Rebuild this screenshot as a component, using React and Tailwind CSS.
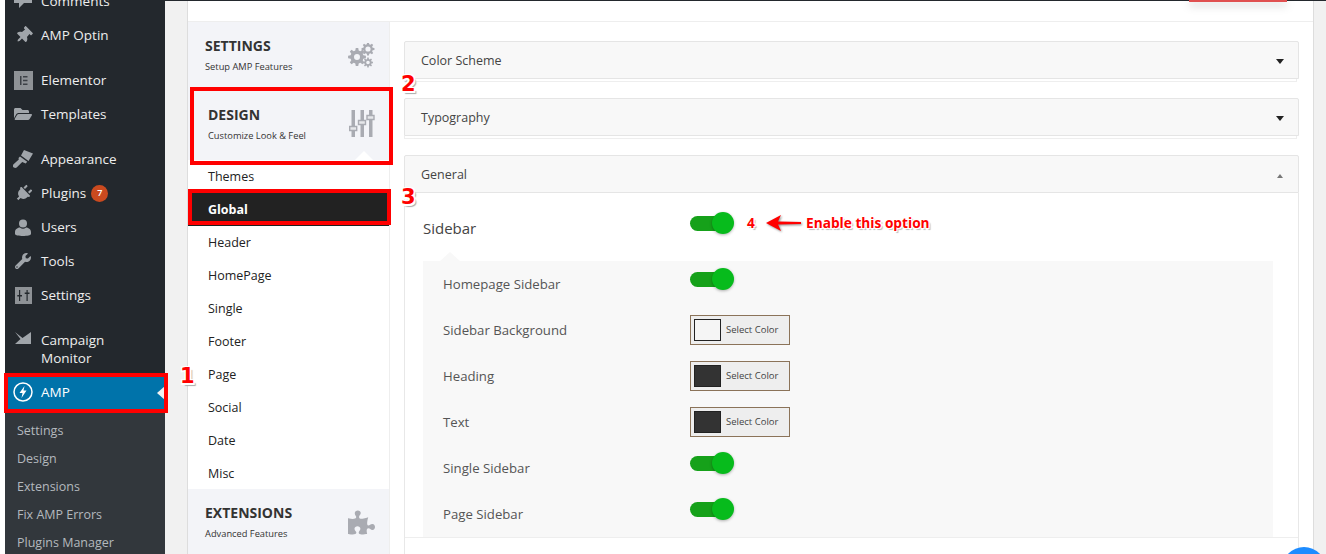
import React from "react";
import { FaThumbtack, FaFolderOpen, FaPlug, FaWrench, FaPuzzlePiece } from "react-icons/fa";

const gearPath = (cx, cy, ro, ri, hole, teeth) => {
  const pts = [];
  const step = (Math.PI * 2) / teeth;
  for (let k = 0; k < teeth; k++) {
    const a = k * step;
    const w = step * 0.22;
    [[a - w * 1.5, ri], [a - w * 0.8, ro], [a + w * 0.8, ro], [a + w * 1.5, ri]].forEach(([t, r]) => {
      pts.push(`${(cx + r * Math.cos(t)).toFixed(2)} ${(cy + r * Math.sin(t)).toFixed(2)}`);
    });
  }
  return `M${pts.join("L")}Z M${cx - hole} ${cy}a${hole} ${hole} 0 1 0 ${hole * 2} 0a${hole} ${hole} 0 1 0 ${-hole * 2} 0Z`;
};

const GearsIcon = () => (
  <svg width="27" height="25" viewBox="0 0 27 25">
    <path fill="#a9abb2" fillRule="evenodd" d={gearPath(9, 14, 9, 6.600, 3, 8)} />
    <path fill="#a9abb2" fillRule="evenodd" d={gearPath(20, 6, 6.500, 4.800, 2.600, 8)} />
    <path fill="#a9abb2" fillRule="evenodd" d={gearPath(20, 19.500, 5, 3.600, 1.800, 8)} />
  </svg>
);
const Elementor = () => (
  <svg width="19" height="19" viewBox="0 0 19 19"><path fill="#8e9296" d="M0 0h19v19H0z" /><path fill="#3c4146" d="M6 5h1.500v9H6zM9 5h4.500v1.500H9zM9 8.700h4.500v1.500H9zM9 12.500h4.500V14H9z" /></svg>
);
const SettingsIcon = () => (
  <svg width="17" height="17" viewBox="0 0 17 17"><path fill="#8e9296" d="M0 0h17v17H0z" /><path fill="#23282d" d="M4 3h1.200v5H7v1.500H5.200V14H4V9.500H2.300V8H4zM11.500 3h1.200v2.500h1.800V7h-1.800v7h-1.200V7H9.700V5.500h1.800z" /></svg>
);
const CampaignIcon = () => (
  <svg width="16" height="12" viewBox="0 0 16 12"><path fill="#a0a5aa" d="M0 0l7.500 6L16 0v12H0l5.500-5z" /></svg>
);
const AmpIcon = () => (
  <svg width="20" height="20" viewBox="0 0 20 20"><circle cx="10" cy="10" r="9" fill="none" stroke="#fff" strokeWidth="1.500" /><path fill="#fff" d="M11.500 4L6.500 11h3L8.500 16l5-7.500h-3z" /></svg>
);
const BrushIcon = () => (
  <svg width="20" height="18" viewBox="0 0 20 18">
    <path fill="#a0a5aa" d="M11 0l9 3.500-4.500 7.500L8 5.500zM7 6.500l7.200 5.300-1.500 1.700-3.500-1.500-5.500 5.500c-1 .7-3 .5-3.700-.7-.4-1 0-2 .8-2.800l5-4.500-.3-1.500z" />
  </svg>
);
const UserIcon = () => (
  <svg width="16" height="17" viewBox="0 0 16 17">
    <circle cx="8" cy="4.500" r="4" fill="#a0a5aa" />
    <path fill="#a0a5aa" d="M0 13c0-3 3-4.500 5-4.500 1 .8 2 1.200 3 1.200s2-.4 3-1.200c2 0 5 1.500 5 4.500v2c0 1.200-4 2-8 2s-8-.8-8-2z" />
  </svg>
);
const SlidersIcon = () => (
  <svg width="26" height="28" viewBox="0 0 26 28">
    <path fill="#a9abb2" d="M2.500 0h3.500v16H2.500zM2.500 21h3.500v6H2.500zM11.500 0h3.500v10h-3.500zM11.500 15h3.500v12h-3.500zM20 0h3.500v5H20zM20 10h3.500v17H20z" />
    <path fill="#e6e7ea" stroke="#a9abb2" strokeWidth="1.400" d="M.700 16.500h7v4h-7zM9.500 10.500h7v4h-7zM18 5.500h7v4h-7z" />
  </svg>
);

const sideGroups = [
  [
    { t: "Comments", i: <svg width="20" height="20" viewBox="0 0 20 20"><path fill="#a0a5aa" d="M1 2h18v10h-8l-5 5v-5H1z" /></svg> },
    { t: "AMP Optin", i: <FaThumbtack size={17} color="#a0a5aa" className="rotate-45" /> },
  ],
  [
    { t: "Elementor", i: <Elementor /> },
    { t: "Templates", i: <FaFolderOpen size={18} color="#a0a5aa" /> },
  ],
  [
    { t: "Appearance", i: <BrushIcon /> },
    { t: "Plugins", i: <FaPlug size={17} color="#a0a5aa" className="rotate-45" />, badge: "7" },
    { t: "Users", i: <UserIcon /> },
    { t: "Tools", i: <FaWrench size={16} color="#a0a5aa" /> },
    { t: "Settings", i: <SettingsIcon /> },
  ],
];

const subItems = ["Settings", "Design", "Extensions", "Fix AMP Errors", "Plugins Manager"];
const navItems = ["Themes", "Global", "Header", "HomePage", "Single", "Footer", "Page", "Social", "Date", "Misc"];

function SideRow({ t, i, badge }) {
  return (
    <div className="h-[34px] flex items-center text-[13.500px] text-[#eeeeee]">
      <span className="w-[36px] flex justify-center shrink-0">{i}</span>
      <span>{t}</span>
      {badge && (
        <span className="ml-[5px] w-[17px] h-[17px] rounded-full bg-[#ca4a1f] text-white text-[9px] font-semibold flex items-center justify-center">{badge}</span>
      )}
    </div>
  );
}

function Sidebar() {
  return (
    <aside className="w-[160px] shrink-0 bg-[#23282d] h-[554px] overflow-hidden">
      <div className="mt-[-16px]">
        {sideGroups.map((g, k) => (
          <div key={k} className="mb-[11px]">
            {g.map((r) => <SideRow key={r.t} {...r} />)}
          </div>
        ))}
        <div className="h-[52px] flex text-[13.500px] leading-[18px] text-[#eeeeee] pt-[8px]">
          <span className="w-[36px] flex justify-center shrink-0 pt-[1px]"><CampaignIcon /></span>
          <span>Campaign<br />Monitor</span>
        </div>
        <div className="relative h-[34px] bg-[#0073aa] flex items-center text-[13.500px] text-white">
          <span className="w-[36px] flex justify-center shrink-0"><AmpIcon /></span>
          <span>AMP</span>
          <span className="absolute right-0 top-[11px] w-0 h-0 border-y-[7px] border-y-transparent border-r-[8px] border-r-[#f1f1f1]" />
        </div>
        <div className="bg-[#32373c] pt-[8px]">
          {subItems.map((s) => (
            <div key={s} className="h-[28px] flex items-center pl-[12px] text-[12.500px] text-[#b4b9be]">{s}</div>
          ))}
        </div>
      </div>
    </aside>
  );
}

function NavBlock({ title, sub, icon, pad, h, tri }) {
  return (
    <div className={`relative bg-[#f3f4f8] flex items-center justify-between ${pad} ${h}`}>
      <div>
        <div className="text-[14px] leading-[18px] font-bold text-[#333]">{title}</div>
        <div className="text-[9.300px] leading-[14px] mt-[5px] text-[#333]">{sub}</div>
      </div>
      {icon}
      {tri && <span className="absolute bottom-0 left-[167px] w-0 h-0 border-x-[9px] border-x-transparent border-b-[9px] border-b-white" />}
    </div>
  );
}

function Nav() {
  return (
    <nav className="w-[202px] shrink-0 border-r border-[#eeeeee]">
      <NavBlock title="SETTINGS" sub="Setup AMP Features" pad="pl-[17px] pr-[14px]" h="h-[66px]" icon={<GearsIcon />} />
      <NavBlock title="DESIGN" sub="Customize Look &amp; Feel" pad="pl-[20px] pr-[14px]" h="h-[72px]" tri icon={<SlidersIcon />} />
      <div className="bg-white -mb-[1px]">
        {navItems.map((n) => (
          <div key={n} className={`h-[33px] flex items-center pt-[2px] pl-[20px] text-[12.500px] ${n === "Global" ? "bg-[#222222] text-white font-bold" : "text-[#222] font-medium"}`}>{n}</div>
        ))}
      </div>
      <NavBlock title="EXTENSIONS" sub="Advanced Features" pad="pl-[17px] pr-[14px]" h="h-[66px]" icon={<FaPuzzlePiece size={27} color="#a9abb2" />} />
    </nav>
  );
}

function Accordion({ title, open }) {
  return (
    <div className={open ? "" : "mb-[16px]"}>
      <div className="h-[38px] bg-[#f8f8f8] border border-[#e5e5e5] rounded-t-[2px] flex items-center justify-between pt-[3px] pl-[16px] pr-[14px] text-[12.500px] font-medium text-[#444]">
        <span>{title}</span>
        {open
          ? <span className="w-0 h-0 mr-[1px] border-x-[3px] border-x-transparent border-b-[4px] border-b-[#777]" />
          : <span className="w-0 h-0 border-x-[4px] border-x-transparent border-t-[5px] border-t-[#222]" />}
      </div>
      {!open && <div className="h-[3px] mr-[2px] border-x border-b border-[#eeeeee]" />}
    </div>
  );
}

function Toggle() {
  return (
    <div className="relative w-[44px] h-[22px] flex items-center">
      <div className="w-[40px] h-[15px] rounded-full bg-[#16a11a]" />
      <div className="absolute right-0 top-0 w-[22px] h-[22px] rounded-full bg-[#07bb1c] shadow-[0_1px_3px_rgba(0,0,0,0.3)]" />
    </div>
  );
}

function ColorPick({ color }) {
  return (
    <div className="w-[100px] h-[30px] -mt-[2px] bg-[#eeeeee] border border-[#8b7359] flex items-center pl-[3px] gap-[5px]">
      <span className="w-[27px] h-[22px] border border-[#222]" style={{ background: color }} />
      <span className="text-[9.500px] text-[#444]">Select Color</span>
    </div>
  );
}

const rows = [
  ["Homepage Sidebar", <span className="-mt-[12px]"><Toggle /></span>],
  ["Sidebar Background", <ColorPick color="#f5f5f5" />],
  ["Heading", <ColorPick color="#333333" />],
  ["Text", <ColorPick color="#333333" />],
  ["Single Sidebar", <span className="-mt-[12px]"><Toggle /></span>],
  ["Page Sidebar", <span className="-mt-[12px]"><Toggle /></span>],
];

function Content() {
  return (
    <section className="flex-1 pl-[14px] pr-[14px] pt-[19px] min-w-0">
      <Accordion title="Color Scheme" />
      <Accordion title="Typography" />
      <Accordion title="General" open />
      <div className="border-x border-[#e8e8e8] h-[400px] pt-[21px]">
        <div className="flex h-[47px] pl-[18px]">
          <div className="w-[267px] pt-[3px] text-[15px] text-[#444]">Sidebar</div>
          <div className="-mt-[2px]"><Toggle /></div>
        </div>
        <div className="relative ml-[18px] mr-[25px] bg-[#f8f8f8] h-[276px] pt-[1px]">
          <span className="absolute -top-[9px] left-[17px] w-0 h-0 border-x-[10px] border-x-transparent border-b-[9px] border-b-[#f8f8f8]" />
          {rows.map(([l, c]) => (
            <div key={l} className="h-[46px] flex items-center pl-[20px] text-[13.200px] text-[#555]">
              <span className="w-[247px]">{l}</span>
              {c}
            </div>
          ))}
        </div>
        <div className="border-t border-[#eeeeee]" />
      </div>
    </section>
  );
}

const redNum = "absolute font-bold text-[#f00] text-[21px] leading-none [font-family:'DejaVu_Sans',sans-serif] [text-shadow:1.500px_1.500px_0_#fff,-1.500px_-1.500px_0_#fff,1.500px_-1.500px_0_#fff,-1.500px_1.500px_0_#fff,2.500px_2.500px_1px_#aaa]";
const redText = "absolute text-[13.700px] font-bold text-[#f00] [text-shadow:1px_1px_0_#fff,-1px_-1px_0_#fff,1px_-1px_0_#fff,-1px_1px_0_#fff,2px_2px_1px_#bbb]";

export default function App() {
  return (
    <div className="relative flex h-[554px] w-[1326px] overflow-hidden bg-[#f1f1f1] [font-family:'Open_Sans','Noto_Sans',sans-serif]">
      <div className="w-[5px] shrink-0 bg-white" />
      <Sidebar />
      <main className="flex-1 min-w-0 pl-[22px] pr-[12px] border-t border-[#23282d]">
        <div className="bg-white border-x border-[#dddddd] h-[554px]">
          <div className="h-[21px] border-b border-[#eeeeee]" />
          <div className="flex">
            <Nav />
            <Content />
          </div>
        </div>
      </main>

      <div className="absolute left-[1189px] top-0 w-[98px] h-[2px] bg-[#e05050] shadow-[0_3px_8px_rgba(0,0,0,0.35)]" />
      <div className="absolute left-[1282px] top-[547px] w-[44px] h-[44px] rounded-full bg-[#1e8cff]" />

      <div className="absolute left-[4px] top-[373px] w-[164px] h-[40px] border-[4px] border-[#f00]" />
      <div className="absolute left-[190px] top-[87px] w-[203px] h-[78px] border-[4px] border-[#f00]" />
      <div className="absolute left-[188px] top-[189px] w-[203px] h-[36px] border-[4px] border-[#f00]" />
      <span className={`${redNum} left-[180px] top-[366px]`}>1</span>
      <span className={`${redNum} left-[401px] top-[74px]`}>2</span>
      <span className={`${redNum} left-[401px] top-[187px]`}>3</span>
      <span className={`${redText} left-[747px] top-[213px]`}>4</span>
      <svg className="absolute left-[766px] top-[214px] [filter:drop-shadow(1px_1px_1px_#888)]" width="36" height="18" viewBox="0 0 36 18">
        <path fill="#f00" d="M0 9L15 1l-3 6.500 23 .5v2l-23 .5 3 6.500z" />
      </svg>
      <span className={`${redText} left-[806px] top-[213px]`}>Enable this option</span>
    </div>
  );
}
